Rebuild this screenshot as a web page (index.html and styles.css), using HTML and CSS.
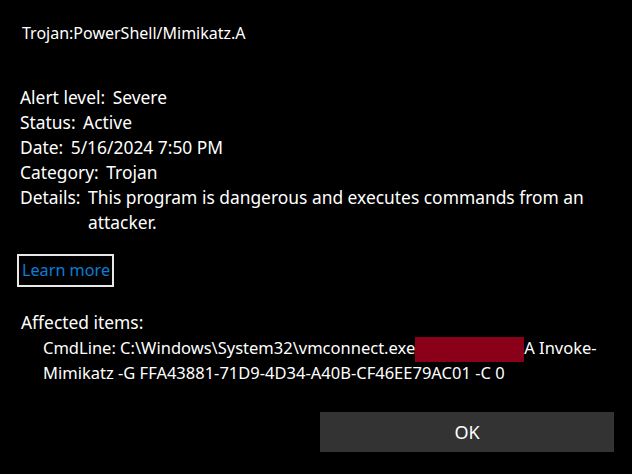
FILE: index.html
```html
<!DOCTYPE html>
<html lang="en">
<head>
<meta charset="utf-8">
<title>Threat details</title>
<link rel="stylesheet" href="styles.css">
</head>
<body>
<main class="dialog">
  <h1 class="title">Trojan:PowerShell/Mimikatz.A</h1>
  <dl class="fields">
    <div class="field"><dt>Alert level:</dt><dd>Severe</dd></div>
    <div class="field"><dt>Status:</dt><dd>Active</dd></div>
    <div class="field"><dt>Date:</dt><dd>5/16/2024 7:50 PM</dd></div>
    <div class="field"><dt>Category:</dt><dd>Trojan</dd></div>
    <div class="field"><dt>Details:</dt><dd>This program is dangerous and executes commands from an attacker.</dd></div>
  </dl>
  <a class="learn" href="#">Learn more</a>
  <section class="affected">
    <h2 class="affected-title">Affected items:</h2>
    <p class="cmd">CmdLine: C:\Windows\System32\vmconnect.exe<span class="redact"></span>A Invoke-<br>Mimikatz -G FFA43881-71D9-4D34-A40B-CF46EE79AC01 -C 0</p>
  </section>
  <div class="actions">
    <button class="ok" type="button">OK</button>
  </div>
</main>
</body>
</html>
```
FILE: styles.css
```css
html, body {
  margin: 0;
  padding: 0;
  background: #000;
}
body {
  width: 632px;
  height: 474px;
  overflow: hidden;
  color: #fff;
  font-family: "Noto Sans", "Open Sans", sans-serif;
}
.dialog {
  display: flex;
  flex-direction: column;
  padding: 0 20px 0 20px;
}
.title {
  margin: 23px 0 0 2px;
  font-size: 16px;
  font-weight: 400;
  line-height: 20px;
}
.fields {
  margin: 42px 0 0 0;
  font-size: 17.4px;
  line-height: 25px;
}
.field {
  display: flex;
  gap: 7.5px;
}
.field dt, .field dd {
  margin: 0;
}
.field dd {
  max-width: 530px;
}
.learn {
  align-self: flex-start;
  margin: 19px 0 0 -3px;
  padding: 1px 2px 1px 3px;
  border: 2px solid #e8e8e8;
  color: #0a7fd6;
  text-decoration: none;
  font-size: 16.2px;
  line-height: 27px;
}
.affected {
  margin-top: 23px;
}
.affected-title {
  margin: 0 0 0 1px;
  font-size: 17.4px;
  font-weight: 400;
  line-height: 25px;
}
.cmd {
  margin: 1px 0 0 23px;
  font-size: 16.5px;
  line-height: 24px;
}
.redact {
  display: inline-block;
  width: 109px;
  height: 25px;
  margin: -1px 0;
  vertical-align: middle;
  background: #8a0018;
}
.actions {
  display: flex;
  justify-content: flex-end;
  margin-top: 27px;
  margin-right: -2px;
}
.ok {
  width: 294px;
  height: 40px;
  border: none;
  background: #333333;
  color: #fff;
  font-family: inherit;
  font-size: 18px;
}
```
